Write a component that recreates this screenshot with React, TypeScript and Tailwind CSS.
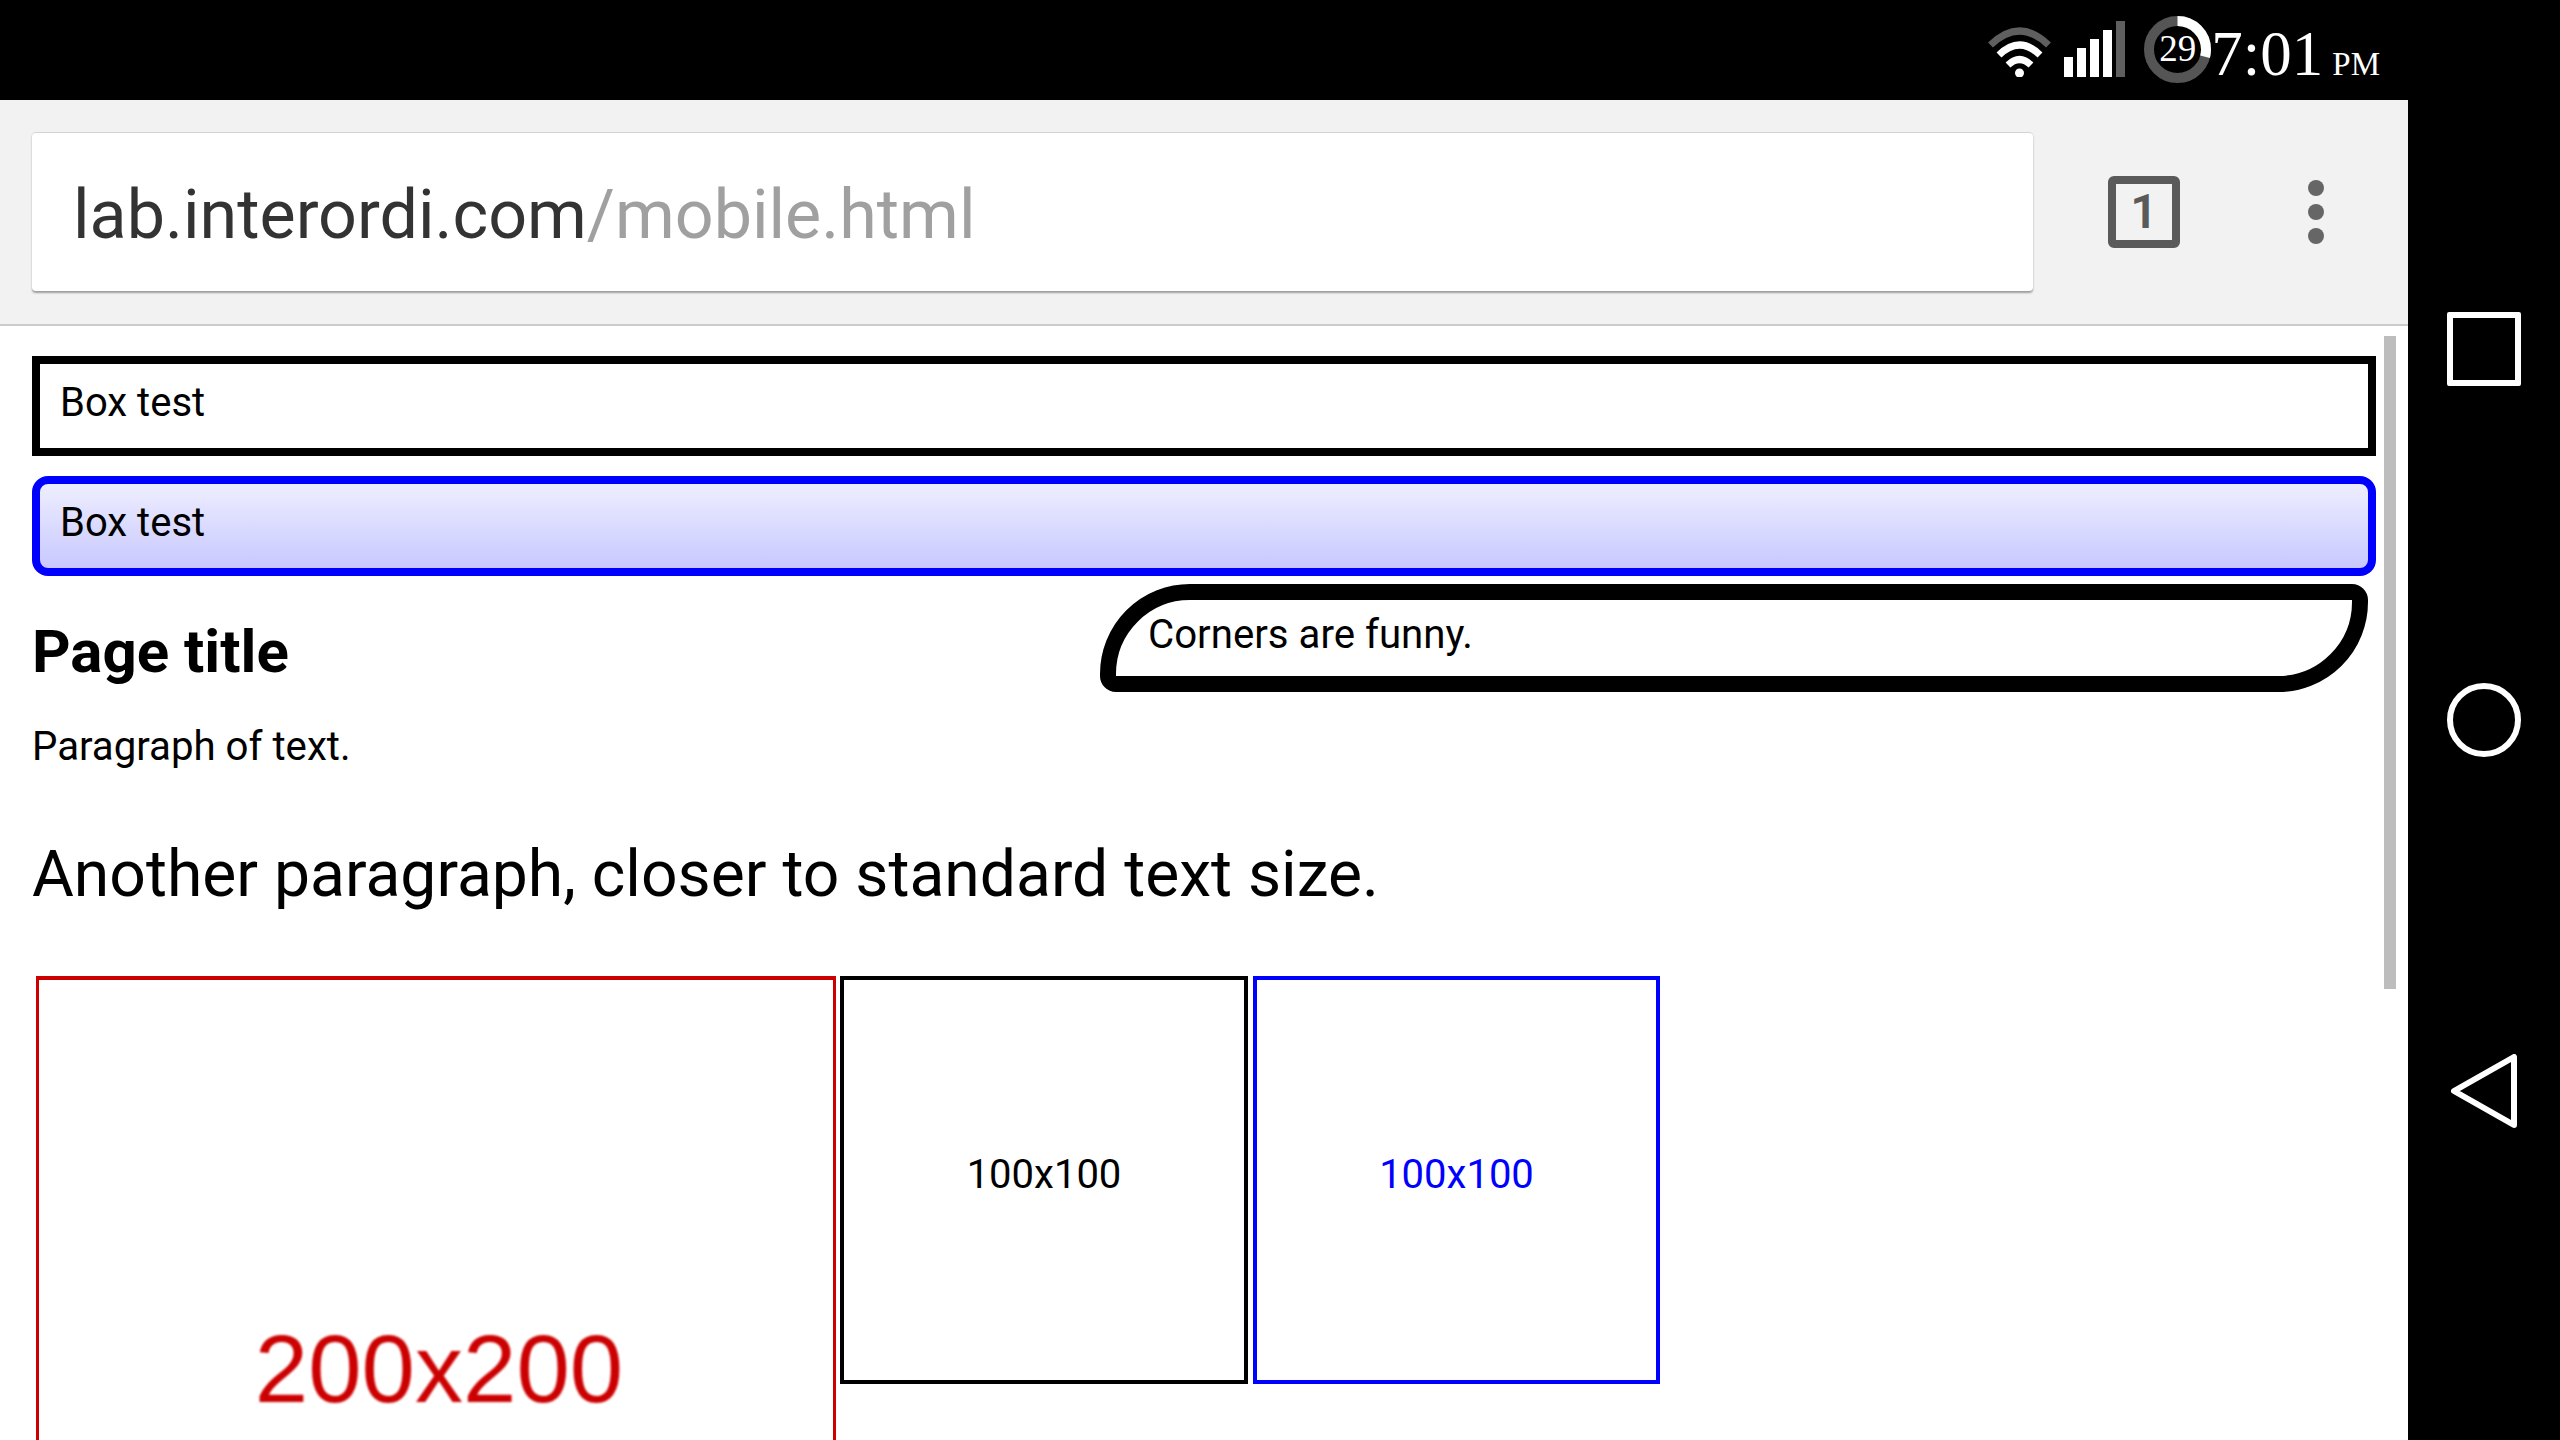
function WifiIcon() {
  return (
    <svg width="65" height="50" viewBox="0 0 65 50" fill="none" strokeWidth="7">
      <path d="M3.5 18 Q32.5 -10 61.5 18" stroke="#5f5f5f" />
      <path d="M12 28 Q32.5 8 53 28" stroke="#fff" />
      <path d="M21 38 Q32.5 27 44 38" stroke="#fff" />
      <circle cx="32.5" cy="46" r="4.5" fill="#fff" />
    </svg>
  )
}

function SignalIcon() {
  return (
    <div className="flex items-end gap-[4px] h-[56px]">
      <div className="w-[9px] h-[20px] bg-white" />
      <div className="w-[9px] h-[29px] bg-white" />
      <div className="w-[9px] h-[38px] bg-white" />
      <div className="w-[9px] h-[47px] bg-white" />
      <div className="w-[9px] h-[56px] bg-[#5f5f5f]" />
    </div>
  )
}

function Battery() {
  return (
    <div className="relative w-[67px] h-[67px]">
      <svg width="67" height="67" viewBox="0 0 67 67" fill="none" strokeWidth="10">
        <circle cx="33.5" cy="33.5" r="28.5" stroke="#555" />
        <circle
          cx="33.5"
          cy="33.5"
          r="28.5"
          stroke="#fff"
          strokeDasharray="52 179"
          transform="rotate(-90 33.5 33.5)"
        />
      </svg>
      <span className="absolute inset-0 flex items-center justify-center pb-[2px] text-[37px] leading-none text-white font-['Liberation_Serif',serif]">
        29
      </span>
    </div>
  )
}

function StatusBar() {
  return (
    <div className="h-[100px] bg-black flex items-start justify-end pr-[28px] font-['Liberation_Serif',serif] text-white">
      <div className="mt-[27px]">
        <WifiIcon />
      </div>
      <div className="ml-[12px] mt-[21px]">
        <SignalIcon />
      </div>
      <div className="ml-[19px] mt-[16px]">
        <Battery />
      </div>
      <span className="mt-[17px] text-[63px] leading-[75px]">7:01</span>
      <span className="ml-[9px] mt-[45px] text-[33px] leading-[38px]">PM</span>
    </div>
  )
}

function Toolbar() {
  return (
    <div className="h-[226px] bg-[#f2f2f2] border-b-2 border-[#cccccc] flex items-start pl-[32px] font-[Roboto,sans-serif]">
      <div className="mt-[32px] w-[2001px] h-[159px] bg-white rounded-[4px] border-t border-[#d4d4d4] shadow-[0_2px_2px_rgba(0,0,0,0.35)] flex items-center pl-[41px] pt-[6px] text-[68.2px] text-[#333333]">
        lab.interordi.com<span className="text-[#a0a0a0]">/mobile.html</span>
      </div>
      <div className="ml-[75px] mt-[76px] w-[72px] h-[72px] border-[8px] border-[#5a5a5a] rounded-[6px] flex items-center justify-center text-[48px] font-semibold leading-none text-[#5a5a5a]">
        1
      </div>
      <div className="ml-[128px] mt-[80px] flex flex-col gap-[8px]">
        <div className="w-[16px] h-[16px] rounded-full bg-[#666666]" />
        <div className="w-[16px] h-[16px] rounded-full bg-[#666666]" />
        <div className="w-[16px] h-[16px] rounded-full bg-[#666666]" />
      </div>
    </div>
  )
}

function Page() {
  return (
    <div className="relative flex-1 bg-white overflow-hidden pt-[30px] px-[32px] font-[Roboto,sans-serif] text-black">
      {/* scrollbar overlay */}
      <div className="absolute left-[2384px] top-[10px] w-[12px] h-[653px] bg-[#bdbdbd]" />

      <div className="w-[2344px] h-[100px] border-[8px] border-black pl-[20px] pt-[14px] text-[40px] leading-[50px]">
        Box test
      </div>
      <div className="mt-[20px] w-[2344px] h-[100px] border-[8px] border-[#0000ff] rounded-[16px] bg-gradient-to-b from-[#eeeeff] to-[#c8c8ff] pl-[20px] pt-[14px] text-[40px] leading-[50px]">
        Box test
      </div>

      <div className="float-right mt-[8px] mr-[8px] w-[1268px] h-[108px] border-[16px] border-black rounded-tl-[90px] rounded-br-[90px] rounded-tr-[16px] rounded-bl-[16px] pl-[32px] pt-[12px] text-[40.2px] leading-[46px]">
        Corners are funny.
      </div>

      <h1 className="pt-[42px] text-[60px] font-bold leading-[68px]">Page title</h1>
      <p className="mt-[36px] text-[40.2px] leading-[50px]">Paragraph of text.</p>
      <p className="mt-[64px] text-[64.2px] leading-[76px]">Another paragraph, closer to standard text size.</p>

      <div className="mt-[64px] ml-[4px] flex items-start">
        <div className="shrink-0 mr-[4px] w-[800px] h-[800px] border-x-[3px] border-t-[4px] border-[#cc0000] flex items-center justify-center pb-[18px] pl-[6px] text-[96px] text-[#cc0000] font-['Liberation_Sans',sans-serif]">
          <span className="blur-[1px]">200x200</span>
        </div>
        <div className="shrink-0 mr-[5px] w-[408px] h-[408px] border-[4px] border-black flex items-center justify-center pb-[10px] text-[40px]">
          100x100
        </div>
        <div className="shrink-0 w-[407px] h-[408px] border-[4px] border-[#0000ff] flex items-center justify-center pb-[10px] text-[40px] text-[#0000ff]">
          100x100
        </div>
      </div>
    </div>
  )
}

function NavBar() {
  return (
    <div className="w-[152px] bg-black flex flex-col items-center">
      <div className="mt-[312px] w-[74px] h-[74px] border-[6px] border-white rounded-[2px]" />
      <div className="mt-[297px] w-[74px] h-[74px] border-[6px] border-white rounded-full" />
      <svg className="mt-[297px]" width="74" height="74" viewBox="0 0 74 74" fill="none">
        <path d="M7 37 L67 3 V71 Z" stroke="#fff" strokeWidth="6" strokeLinejoin="round" />
      </svg>
    </div>
  )
}

export default function App() {
  return (
    <div className="flex w-[2560px] h-[1440px] overflow-hidden">
      <div className="w-[2408px] flex flex-col">
        <StatusBar />
        <Toolbar />
        <Page />
      </div>
      <NavBar />
    </div>
  )
}
